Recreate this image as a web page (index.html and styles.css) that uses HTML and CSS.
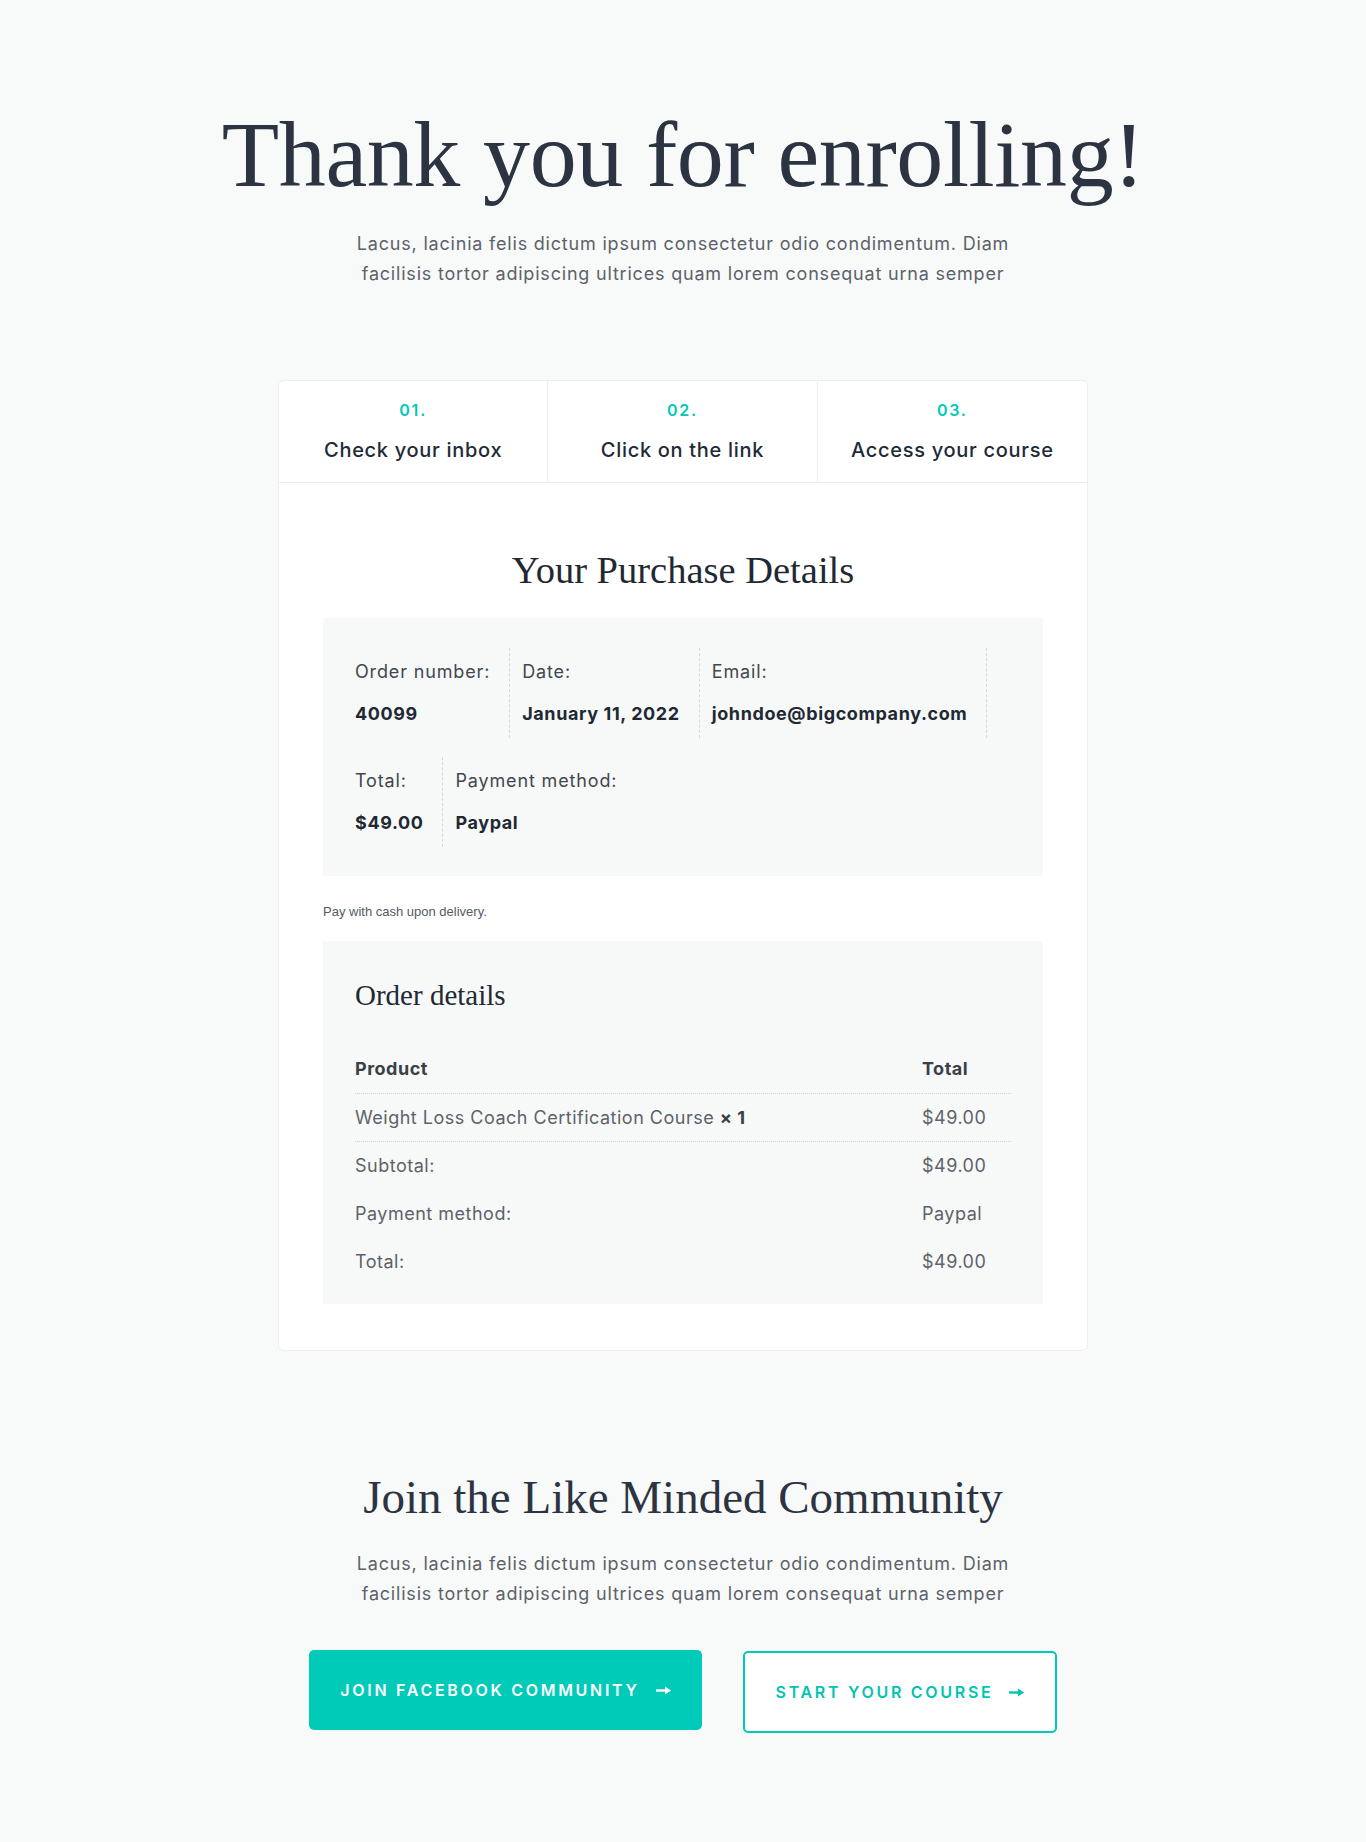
FILE: index.html
```html
<!DOCTYPE html>
<html lang="en">
<head>
<meta charset="utf-8">
<title>Thank you for enrolling!</title>
<link rel="stylesheet" href="styles.css">
</head>
<body>
<main class="page">
  <header class="hero">
    <h1 class="hero-title">Thank you for enrolling!</h1>
    <p class="lead">Lacus, lacinia felis dictum ipsum consectetur odio condimentum. Diam facilisis tortor adipiscing ultrices quam lorem consequat urna semper</p>
  </header>

  <section class="card">
    <div class="steps">
      <div class="step">
        <div class="step-num">01.</div>
        <div class="step-title">Check your inbox</div>
      </div>
      <div class="step">
        <div class="step-num">02.</div>
        <div class="step-title">Click on the link</div>
      </div>
      <div class="step">
        <div class="step-num">03.</div>
        <div class="step-title">Access your course</div>
      </div>
    </div>

    <div class="card-body">
      <h2 class="section-title">Your Purchase Details</h2>

      <div class="panel">
        <ul class="overview-row">
          <li class="overview-item"><span class="overview-label">Order number:</span><strong class="overview-value">40099</strong></li>
          <li class="overview-item"><span class="overview-label">Date:</span><strong class="overview-value">January 11, 2022</strong></li>
          <li class="overview-item"><span class="overview-label">Email:</span><strong class="overview-value">johndoe@bigcompany.com</strong></li>
        </ul>
        <ul class="overview-row">
          <li class="overview-item"><span class="overview-label">Total:</span><strong class="overview-value">$49.00</strong></li>
          <li class="overview-item overview-item-last"><span class="overview-label">Payment method:</span><strong class="overview-value">Paypal</strong></li>
        </ul>
      </div>

      <p class="note">Pay with cash upon delivery.</p>

      <div class="order">
        <h3 class="order-title">Order details</h3>
        <table class="order-table">
          <thead>
            <tr><th class="col-product">Product</th><th class="col-total">Total</th></tr>
          </thead>
          <tbody>
            <tr class="item-row"><td>Weight Loss Coach Certification Course <strong class="qty">× 1</strong></td><td>$49.00</td></tr>
          </tbody>
          <tfoot>
            <tr><td>Subtotal:</td><td>$49.00</td></tr>
            <tr><td>Payment method:</td><td>Paypal</td></tr>
            <tr><td>Total:</td><td>$49.00</td></tr>
          </tfoot>
        </table>
      </div>
    </div>
  </section>

  <section class="community">
    <h2 class="community-title">Join the Like Minded Community</h2>
    <p class="lead">Lacus, lacinia felis dictum ipsum consectetur odio condimentum. Diam facilisis tortor adipiscing ultrices quam lorem consequat urna semper</p>
    <div class="actions">
      <a class="btn btn-primary" href="#">Join Facebook Community
        <svg class="arrow" width="15" height="9" viewBox="0 0 15 9" aria-hidden="true"><path d="M0 4.5h10" stroke="currentColor" stroke-width="2.4"/><path d="M9 0.5l6 4-6 4z" fill="currentColor"/></svg>
      </a>
      <a class="btn btn-outline" href="#">Start your course
        <svg class="arrow" width="15" height="9" viewBox="0 0 15 9" aria-hidden="true"><path d="M0 4.5h10" stroke="currentColor" stroke-width="2.4"/><path d="M9 0.5l6 4-6 4z" fill="currentColor"/></svg>
      </a>
    </div>
  </section>
</main>
</body>
</html>
```

FILE: styles.css
```css
* { box-sizing: border-box; }

body {
  margin: 0;
  background: #f8fafa;
  font-family: Inter, "Noto Sans", sans-serif;
  color: #5d6269;
}

.hero {
  padding-top: 102px;
  text-align: center;
}

.hero-title {
  margin: 0;
  font-family: "Liberation Serif", serif;
  font-weight: 400;
  font-size: 94px;
  line-height: 104px;
  letter-spacing: -0.4px;
  color: #2b3440;
}

.lead {
  margin: 23px auto 0;
  max-width: 665px;
  font-size: 18px;
  line-height: 30px;
  letter-spacing: 0.8px;
  color: #5d6269;
}

.card {
  width: 810px;
  margin: 91px auto 0;
  background: #fff;
  border: 1px solid #eceeef;
  border-radius: 6px;
}

.steps {
  display: grid;
  grid-template-columns: repeat(3, 1fr);
  border-bottom: 1px solid #eceeef;
}

.step {
  padding: 17px 0 18px;
  text-align: center;
  border-right: 1px solid #eceeef;
}

.step:last-child { border-right: 0; }

.step-num {
  font-size: 16px;
  line-height: 24px;
  font-weight: 600;
  letter-spacing: 1.8px;
  color: #00c9b7;
}

.step-title {
  margin-top: 14px;
  font-size: 20px;
  line-height: 28px;
  font-weight: 500;
  letter-spacing: 0.7px;
  color: #1e2a36;
}

.card-body {
  padding: 64px 44px 46px;
}

.section-title {
  margin: 0 0 25px;
  text-align: center;
  font-family: "Liberation Serif", serif;
  font-weight: 400;
  font-size: 38.5px;
  line-height: 46px;
  color: #1f2933;
}

.panel {
  background: #f7f9f9;
  padding: 30px 32px 29px;
}

.overview-row {
  display: flex;
  margin: 0;
  padding: 0;
  list-style: none;
}

.overview-row + .overview-row { margin-top: 19px; }

.overview-item {
  padding: 9px 19px 9px 0;
  margin-right: 12px;
  border-right: 1px dashed #d6d9db;
}

.overview-item-last { border-right: 0; }

.overview-label {
  display: block;
  font-size: 18px;
  line-height: 30px;
  letter-spacing: 0.85px;
  color: #41474e;
}

.overview-value {
  display: block;
  margin-top: 12px;
  font-size: 18px;
  line-height: 30px;
  font-weight: 700;
  letter-spacing: 0.6px;
  color: #1f2933;
}

.note {
  margin: 27px 0 20px;
  font-family: "Liberation Sans", Arial, sans-serif;
  font-size: 13px;
  line-height: 18px;
  color: #555a5f;
}

.order {
  background: #f7f9f9;
  padding: 36px 32px 19px;
}

.order-title {
  margin: 0 0 32px;
  font-family: "Liberation Serif", serif;
  font-weight: 400;
  font-size: 29px;
  line-height: 36px;
  color: #1f2933;
}

.order-table {
  width: 100%;
  border-collapse: collapse;
  font-size: 18px;
  letter-spacing: 0.5px;
  color: #5d6269;
}

.order-table th,
.order-table td {
  height: 48px;
  padding: 0;
  text-align: left;
  vertical-align: middle;
}

.order-table th {
  font-weight: 700;
  color: #3a4047;
}

.order-table .col-total { width: 89px; }

.order-table thead tr,
.order-table .item-row {
  border-bottom: 1px dotted #cfd3d6;
}

.qty {
  font-weight: 700;
  color: #3a4047;
}

.community {
  margin-top: 118px;
  padding-bottom: 110px;
  text-align: center;
}

.community-title {
  margin: 0;
  font-family: "Liberation Serif", serif;
  font-weight: 400;
  font-size: 47px;
  line-height: 56px;
  color: #2b3440;
}

.community .lead { margin-top: 24px; }

.actions {
  display: flex;
  justify-content: center;
  align-items: flex-start;
  gap: 41px;
  margin-top: 41px;
}

.btn {
  display: inline-flex;
  align-items: center;
  justify-content: center;
  gap: 16px;
  font-size: 16px;
  font-weight: 600;
  letter-spacing: 2.7px;
  text-transform: uppercase;
  text-decoration: none;
  border-radius: 5px;
}

.btn-primary {
  width: 393px;
  height: 80px;
  background: #00cbb8;
  color: #fff;
}

.btn-outline {
  width: 314px;
  height: 82px;
  margin-top: 1px;
  border: 2px solid #00cbb8;
  background: #fff;
  color: #00c4b2;
}

.arrow { flex: none; }
```
